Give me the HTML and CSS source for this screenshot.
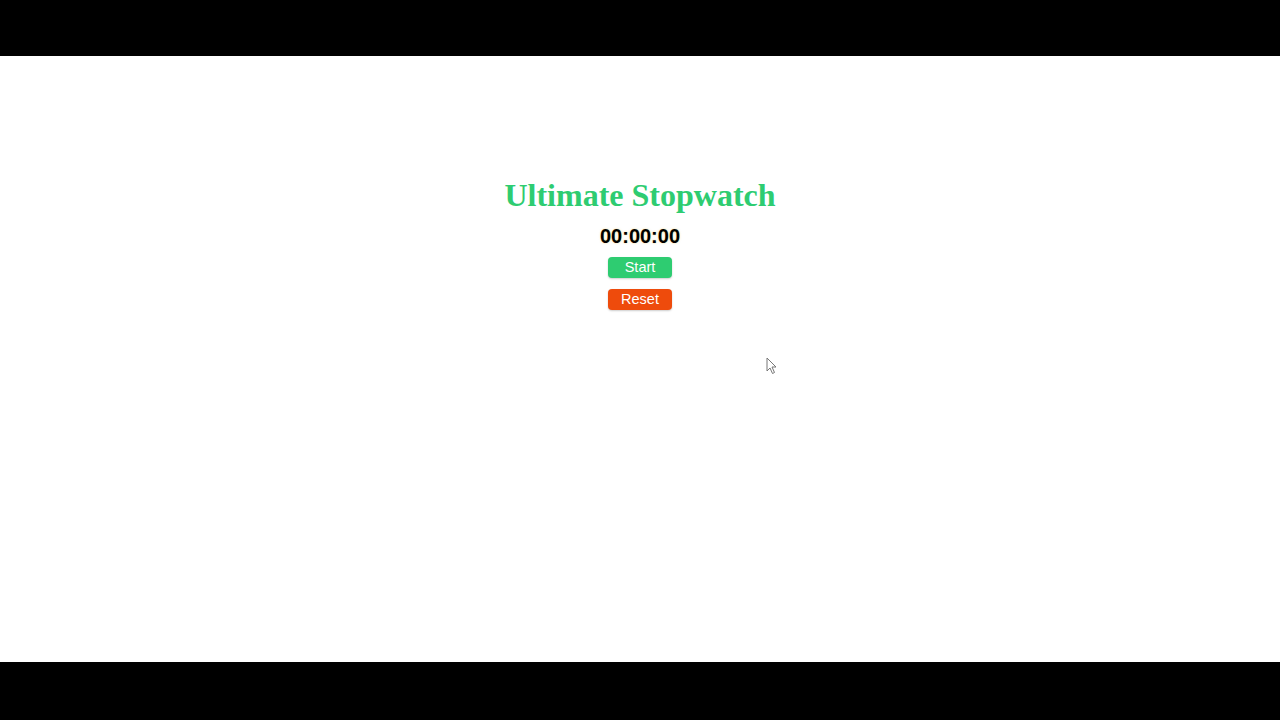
FILE: index.html
```html
<!DOCTYPE html>
<html lang="en">
<head>
<meta charset="utf-8">
<title>Ultimate Stopwatch</title>
<link rel="stylesheet" href="styles.css">
</head>
<body>
<div class="bar bar-top"></div>
<main class="stage">
  <h1 class="title">Ultimate Stopwatch</h1>
  <div class="timer">00:00:00</div>
  <div class="controls">
    <button class="btn btn-start">Start</button>
    <button class="btn btn-reset">Reset</button>
  </div>
  <svg class="cursor" width="12" height="18" viewBox="0 0 12 18"><path d="M1 1 L1 14 L4 11 L6.5 16.5 L8.5 15.5 L6 10 L10 10 Z" fill="#fff" stroke="#777" stroke-width="1"/></svg>
</main>
<div class="bar bar-bottom"></div>
</body>
</html>
```
FILE: styles.css
```css
html, body {
  margin: 0;
  padding: 0;
  height: 100%;
}
body {
  display: flex;
  flex-direction: column;
  background: #fff;
  font-family: "Liberation Sans", Arial, sans-serif;
}
.bar {
  background: #000;
  flex: none;
}
.bar-top { height: 56px; }
.bar-bottom { height: 58px; }
.stage {
  flex: 1;
  position: relative;
  display: flex;
  flex-direction: column;
  align-items: center;
  padding-top: 121px;
}
.title {
  margin: 0;
  font-family: "Liberation Serif", "Times New Roman", serif;
  font-weight: bold;
  font-size: 32px;
  line-height: 37px;
  color: #2ecc71;
}
.timer {
  margin-top: 11px;
  font-size: 20px;
  font-weight: bold;
  line-height: 23px;
  color: #000;
  text-shadow: 0 0 2px rgba(230, 180, 20, 0.55);
}
.controls {
  margin-top: 9px;
  display: flex;
  flex-direction: column;
  align-items: center;
  gap: 11px;
}
.btn {
  width: 64px;
  height: 21px;
  padding: 0;
  border: none;
  border-radius: 4px;
  color: #fff;
  font-family: "Liberation Sans", Arial, sans-serif;
  font-size: 14.5px;
  line-height: 21px;
  box-shadow: 0 1px 2px rgba(0, 0, 0, 0.2);
}
.btn-start { background: #2ecc71; }
.btn-reset { background: #ee4b0c; }
.cursor {
  position: absolute;
  left: 766px;
  top: 301px;
}
```
